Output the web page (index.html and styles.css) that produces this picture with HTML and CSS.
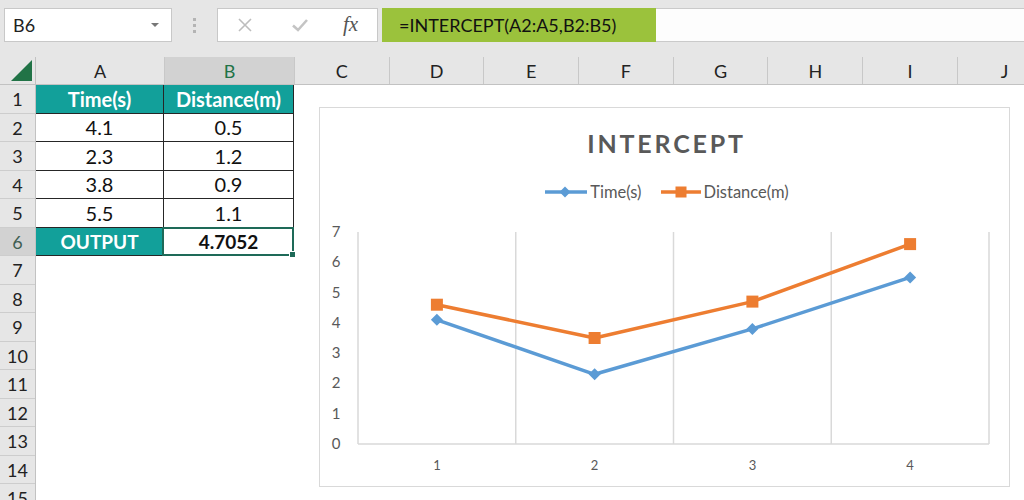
FILE: index.html
```html
<!DOCTYPE html>
<html>
<head>
<meta charset="utf-8">
<link rel="stylesheet" href="styles.css">
</head>
<body>
<div class="app">
  <div class="toolbar">
    <div class="namebox"><span>B6</span><span class="caret"></span></div>
    <div class="grip"><span></span><span></span><span></span></div>
    <div class="btns">
      <svg class="ico-x" width="16" height="16" viewBox="0 0 16 16"><path d="M2 2 L14 14 M14 2 L2 14" stroke="#bdbdbd" stroke-width="1.6" fill="none"/></svg>
      <svg class="ico-ok" width="18" height="16" viewBox="0 0 18 16"><path d="M2 8.5 L7 13 L16 3" stroke="#c4c4c4" stroke-width="2.6" fill="none"/></svg>
      <span class="fx">fx</span>
    </div>
    <div class="formula">
      <div class="fgreen">=INTERCEPT(A2:A5,B2:B5)</div>
      <div class="frest"></div>
    </div>
  </div>

  <div class="colhead">
    <div class="corner"><span class="tri"></span></div>
    <div class="ch wa">A</div>
    <div class="ch wb sel">B</div>
    <div class="ch">C</div>
    <div class="ch">D</div>
    <div class="ch">E</div>
    <div class="ch">F</div>
    <div class="ch">G</div>
    <div class="ch">H</div>
    <div class="ch">I</div>
    <div class="ch">J</div>
  </div>

  <div class="body">
    <div class="rowheads">
      <div class="rh">1</div>
      <div class="rh">2</div>
      <div class="rh">3</div>
      <div class="rh">4</div>
      <div class="rh">5</div>
      <div class="rh sel">6</div>
      <div class="rh">7</div>
      <div class="rh">8</div>
      <div class="rh">9</div>
      <div class="rh">10</div>
      <div class="rh">11</div>
      <div class="rh">12</div>
      <div class="rh">13</div>
      <div class="rh">14</div>
      <div class="rh">15</div>
    </div>
    <div class="cells">
      <div class="table">
        <div class="c head">Time(s)</div>
        <div class="c head">Distance(m)</div>
        <div class="c">4.1</div>
        <div class="c">0.5</div>
        <div class="c">2.3</div>
        <div class="c">1.2</div>
        <div class="c">3.8</div>
        <div class="c">0.9</div>
        <div class="c">5.5</div>
        <div class="c">1.1</div>
        <div class="c head small">OUTPUT</div>
        <div class="c out">4.7052</div>
      </div>
    </div>
  </div>

  <div class="chart">
    <div class="title">INTERCEPT</div>
    <div class="legend">
      <div class="lg">
        <svg width="44" height="14" viewBox="0 0 44 14"><path d="M1 7 H43" stroke="#5b9bd5" stroke-width="3.5"/><path d="M21 1.5 L26.5 7 L21 12.5 L15.5 7 Z" fill="#5b9bd5"/></svg>
        <span>Time(s)</span>
      </div>
      <div class="lg">
        <svg width="42" height="14" viewBox="0 0 42 14"><path d="M1 7 H41" stroke="#ed7d31" stroke-width="3.5"/><rect x="15.5" y="1.5" width="11" height="11" fill="#ed7d31"/></svg>
        <span>Distance(m)</span>
      </div>
    </div>
    <svg class="plot" width="689" height="283" viewBox="0 0 689 283">
      <g stroke="#d9d9d9" stroke-width="1.5">
        <line x1="38" y1="30" x2="38" y2="242"/>
        <line x1="195.75" y1="30" x2="195.75" y2="242"/>
        <line x1="353.5" y1="30" x2="353.5" y2="242"/>
        <line x1="511.25" y1="30" x2="511.25" y2="242"/>
        <line x1="669" y1="30" x2="669" y2="242"/>
        <line x1="38" y1="242" x2="669" y2="242"/>
      </g>
      <g class="ylab" text-anchor="middle">
        <text x="16" y="247">0</text>
        <text x="16" y="217">1</text>
        <text x="16" y="186">2</text>
        <text x="16" y="156">3</text>
        <text x="16" y="126">4</text>
        <text x="16" y="96">5</text>
        <text x="16" y="65">6</text>
        <text x="16" y="35">7</text>
      </g>
      <g class="xlab" text-anchor="middle">
        <text x="116.9" y="268">1</text>
        <text x="274.6" y="268">2</text>
        <text x="432.4" y="268">3</text>
        <text x="590.1" y="268">4</text>
      </g>
      <polyline points="116.9,117.8 274.6,172.3 432.4,126.9 590.1,75.4" fill="none" stroke="#5b9bd5" stroke-width="3.5" stroke-linejoin="round"/>
      <polyline points="116.9,102.7 274.6,136.0 432.4,99.6 590.1,42.1" fill="none" stroke="#ed7d31" stroke-width="3.5" stroke-linejoin="round"/>
      <g fill="#5b9bd5">
        <path d="M116.9 111.8 L122.9 117.8 L116.9 123.8 L110.9 117.8 Z"/>
        <path d="M274.6 166.3 L280.6 172.3 L274.6 178.3 L268.6 172.3 Z"/>
        <path d="M432.4 120.9 L438.4 126.9 L432.4 132.9 L426.4 126.9 Z"/>
        <path d="M590.1 69.4 L596.1 75.4 L590.1 81.4 L584.1 75.4 Z"/>
      </g>
      <g fill="#ed7d31">
        <rect x="110.9" y="96.7" width="12" height="12"/>
        <rect x="268.6" y="130" width="12" height="12"/>
        <rect x="426.4" y="93.6" width="12" height="12"/>
        <rect x="584.1" y="36.1" width="12" height="12"/>
      </g>
    </svg>
  </div>
</div>
</body>
</html>
```

FILE: styles.css
```css
html, body {
  margin: 0;
  padding: 0;
}
body {
  width: 1024px;
  height: 500px;
  overflow: hidden;
  background: #e6e6e6;
  font-family: Lato, "Liberation Sans", sans-serif;
  color: #1a1a1a;
}
.app {
  position: relative;
  width: 1024px;
  height: 500px;
  overflow: hidden;
}

/* toolbar */
.toolbar {
  display: flex;
  align-items: flex-start;
  height: 57px;
  padding-top: 8px;
  box-sizing: border-box;
}
.namebox {
  margin-left: 4px;
  width: 168px;
  height: 34px;
  box-sizing: border-box;
  background: #fff;
  border: 1px solid #c8c8c8;
  display: flex;
  align-items: center;
  justify-content: space-between;
  padding: 0 12px 0 8px;
  font-size: 18px;
  color: #222;
}
.caret {
  width: 0;
  height: 0;
  border-left: 4px solid transparent;
  border-right: 4px solid transparent;
  border-top: 4px solid #777;
}
.grip {
  width: 45px;
  height: 34px;
  display: flex;
  flex-direction: column;
  align-items: center;
  justify-content: center;
  gap: 3px;
}
.grip span {
  width: 3px;
  height: 3px;
  background: #b4b4b4;
}
.btns {
  width: 161px;
  height: 34px;
  box-sizing: border-box;
  background: #fff;
  border: 1px solid #c8c8c8;
  display: flex;
  align-items: center;
  padding-left: 19px;
}
.ico-x {
  margin-right: 38px;
}
.ico-ok {
  margin-right: 34px;
}
.fx {
  font-family: "Liberation Serif", serif;
  font-style: italic;
  font-size: 21px;
  color: #555;
  margin-top: -2px;
}
.formula {
  flex: 1;
  display: flex;
  height: 34px;
  margin-left: 4px;
}
.fgreen {
  width: 274px;
  background: #9bc23c;
  display: flex;
  align-items: center;
  padding-left: 17px;
  box-sizing: border-box;
  font-size: 18px;
  color: #111;
}
.frest {
  flex: 1;
  background: #fdfdfd;
  border-top: 1px solid #cacaca;
  border-bottom: 1px solid #cacaca;
}

/* column header */
.colhead {
  display: flex;
  height: 28px;
  box-sizing: border-box;
  border-bottom: 1px solid #c2c2c2;
  overflow: hidden;
}
.corner {
  width: 36px;
  flex: none;
  position: relative;
  border-right: 1px solid #c2c2c2;
  box-sizing: border-box;
}
.tri {
  position: absolute;
  right: 3px;
  bottom: 3px;
  width: 0;
  height: 0;
  border-left: 21px solid transparent;
  border-bottom: 21px solid #217346;
}
.ch {
  width: 94.7px;
  flex: none;
  box-sizing: border-box;
  border-right: 1px solid #c8c8c8;
  text-align: center;
  font-size: 18px;
  line-height: 28px;
  color: #222;
}
.ch.wa { width: 129px; }
.ch.wb { width: 130px; }
.ch.sel {
  background: #d2d2d2;
  color: #217346;
}

/* body */
.body {
  display: flex;
}
.rowheads {
  width: 36px;
  flex: none;
  box-sizing: border-box;
  border-right: 1px solid #c2c2c2;
}
.rh {
  height: 28.5px;
  box-sizing: border-box;
  border-bottom: 1px solid #cdcdcd;
  text-align: center;
  font-size: 18px;
  line-height: 28px;
  color: #222;
}
.rh.sel {
  background: #d2d2d2;
  color: #3f5f52;
}
.cells {
  flex: 1;
  height: 460px;
  background: #fff;
}
.table {
  display: grid;
  grid-template-columns: 128px 130px;
  grid-auto-rows: 28.5px;
}
.c {
  box-sizing: border-box;
  border-right: 1px solid #262626;
  border-bottom: 1px solid #262626;
  display: flex;
  align-items: center;
  justify-content: center;
  font-size: 20px;
  color: #111;
}
.c.head {
  background: #12a09a;
  color: #fff;
  font-weight: 700;
  font-size: 20px;
}
.c.head.small {
  font-size: 19px;
}
.c.out {
  position: relative;
  font-weight: 700;
  font-size: 19px;
}
.c.out::after {
  content: "";
  position: absolute;
  left: -2px;
  top: -1px;
  right: -1px;
  bottom: -1px;
  border: 2px solid #1e6a58;
}
.c.out::before {
  content: "";
  position: absolute;
  right: -3px;
  bottom: -3px;
  width: 5px;
  height: 5px;
  background: #1e6a58;
  border: 1px solid #fff;
  z-index: 2;
}

/* chart */
.chart {
  position: absolute;
  left: 319px;
  top: 107px;
  width: 691px;
  height: 380px;
  box-sizing: border-box;
  border: 1px solid #d9d9d9;
  background: #fff;
  display: flex;
  flex-direction: column;
  align-items: center;
}
.title {
  margin-top: 20px;
  height: 30px;
  line-height: 30px;
  font-size: 25px;
  font-weight: 700;
  letter-spacing: 2.8px;
  color: #595959;
  padding-left: 4px;
}
.legend {
  margin-top: 24px;
  height: 20px;
  display: flex;
  gap: 18px;
  align-items: center;
  padding-left: 4px;
}
.lg {
  display: flex;
  align-items: center;
  gap: 2px;
  font-size: 16.5px;
  color: #595959;
}
.plot {
  display: block;
}
.ylab {
  font-size: 15px;
  fill: #595959;
  font-family: Lato, "Liberation Sans", sans-serif;
}
.xlab {
  font-size: 13px;
  fill: #595959;
  font-family: Lato, "Liberation Sans", sans-serif;
}
```
